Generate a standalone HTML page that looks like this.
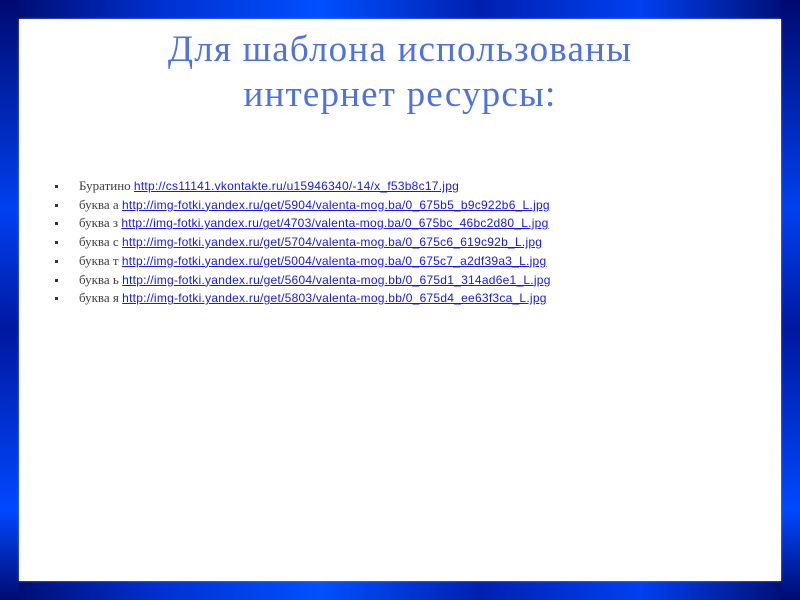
<!DOCTYPE html>
<html><head><meta charset="utf-8"><style>
html,body{margin:0;padding:0}
body{width:800px;height:600px;position:relative;overflow:hidden;
background:
linear-gradient(90deg,#000a6a 0%,#0030d0 20%,#0050ff 40%,#0020b0 60%,#0040f0 80%,#000a6a 100%);}
.v{position:absolute;top:0;bottom:0;width:19px;background:linear-gradient(180deg,#000a70 0%,#0040f0 35%,#0018a0 55%,#0048ff 85%,#000a70 100%)}
.panel{position:absolute;left:19px;top:19px;width:762px;height:562px;background:#fff;box-shadow:0 0 2px #8090c0}
h1{position:absolute;left:0;width:800px;top:27px;margin:0;text-align:center;font:37px/45px "Liberation Serif",serif;letter-spacing:1.2px;color:#4f72dc;font-weight:normal}
ul{position:absolute;left:55px;top:177px;margin:0;padding:0;list-style:none;font:13px/18.7px "Liberation Serif",serif;color:#404040}
li{position:relative;padding-left:24px}
li:before{content:"";position:absolute;left:0;top:8px;width:3px;height:3px;background:#333}
a{color:#1a1ae0;text-decoration:underline;font-family:"Liberation Sans",sans-serif;font-size:12px;letter-spacing:0.25px}
</style></head><body>
<div class="v" style="left:0"></div><div class="v" style="right:0"></div>
<div class="panel"></div>
<h1>Для шаблона использованы<br>интернет ресурсы:</h1>
<ul>
<li>Буратино <a>http://cs11141.vkontakte.ru/u15946340/-14/x_f53b8c17.jpg</a></li>
<li>буква а <a>http://img-fotki.yandex.ru/get/5904/valenta-mog.ba/0_675b5_b9c922b6_L.jpg</a></li>
<li>буква з <a>http://img-fotki.yandex.ru/get/4703/valenta-mog.ba/0_675bc_46bc2d80_L.jpg</a></li>
<li>буква с <a>http://img-fotki.yandex.ru/get/5704/valenta-mog.ba/0_675c6_619c92b_L.jpg</a></li>
<li>буква т <a>http://img-fotki.yandex.ru/get/5004/valenta-mog.ba/0_675c7_a2df39a3_L.jpg</a></li>
<li>буква ь <a>http://img-fotki.yandex.ru/get/5604/valenta-mog.bb/0_675d1_314ad6e1_L.jpg</a></li>
<li>буква я <a>http://img-fotki.yandex.ru/get/5803/valenta-mog.bb/0_675d4_ee63f3ca_L.jpg</a></li>
</ul>
</body></html>
